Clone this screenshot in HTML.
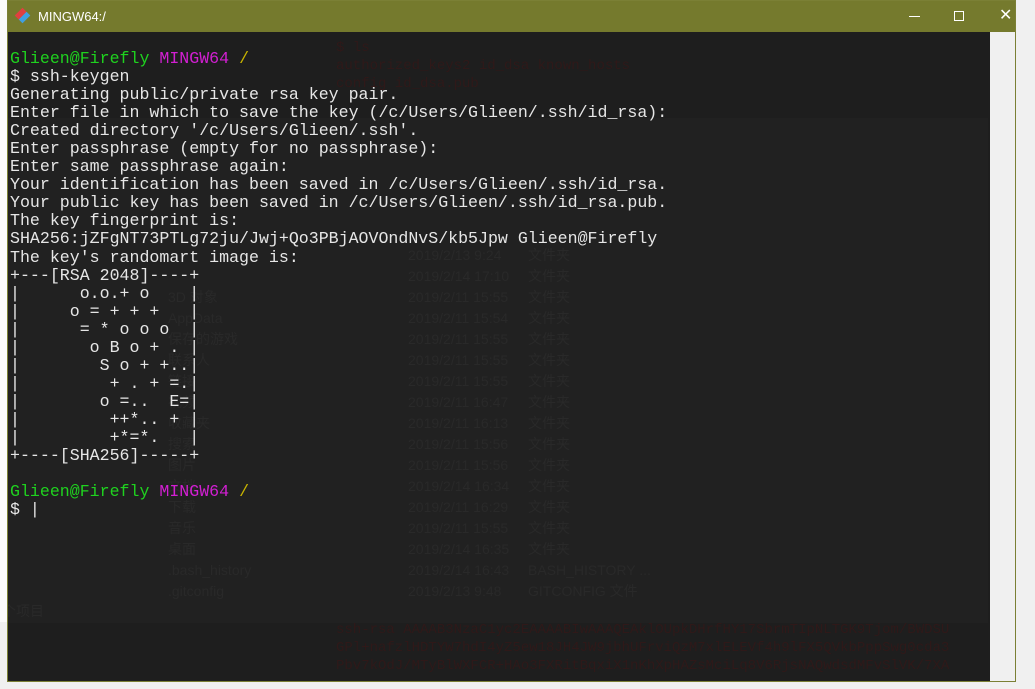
<!DOCTYPE html>
<html><head><meta charset="utf-8"><style>
*{margin:0;padding:0;box-sizing:border-box}
body{width:1035px;height:689px;overflow:hidden;background:#f0f0f0;position:relative;font-family:"Liberation Sans","Noto Sans CJK SC",sans-serif}
.abs{position:absolute}
#leftw{left:0;top:0;width:8px;height:622px;background:#fbfbfb}
#term{left:7px;top:0;width:1009px;height:682px;background:#1e1e1e;border:1px solid #7b8035;overflow:hidden}
#title{left:0;top:0;width:1007px;height:31px;background:#757a2d;color:#fff;font-size:13px}
#exp{left:0;top:117px;width:980px;height:505px;background:#212121}
#sb{left:982px;top:31px;width:25px;height:650px;background:#f0f0f0}
pre{position:absolute;left:2px;top:49px;font-family:"Liberation Mono",monospace;font-size:16.6px;line-height:18.05px;color:#e6e6e6}
.g{color:#1fd21f}.m{color:#d21fd2}.y{color:#c8b400}
.faint{color:#292929;font-size:14px;position:absolute}
.fr{color:#2f1919;font-family:"Liberation Mono",monospace;font-size:14px;position:absolute;white-space:nowrap}
</style></head><body>
<div class="abs" id="leftw"></div>
<div class="abs" id="term">
 <div class="abs" id="exp"></div>
 <div class="fr" style="left:328px;top:38px;line-height:18px">$ ls<br>authorized_keys2  id_dsa       known_hosts<br>config            id_dsa.pub</div>
 <div class="fr" style="left:328px;top:620px;line-height:18px">ssh-rsa AAAAB3NzaC1yc2EAAAABIwAAAQEAklOUpkDHrfHY17SbrmTIpNLTGK9Tjom/BWDSU<br>GPl+nafzlHDTYW7hdI4yZ5ew18JH4JW9jbhUFrviQzM7xlELEVf4h9lFX5QVkbPppSwg0cda3<br>Pbv7kOdJ/MTyBlWXFCR+HAo3FXRitBqxiX1nKhXpHAZsMciLq8V6RjsNAQwdsdMFvSlVK/7XA</div>
 <div class="faint" style="left:400px;top:244px;line-height:21px">2019/2/13 9:24<br>2019/2/14 17:10<br>2019/2/11 15:55<br>2019/2/11 15:54<br>2019/2/11 15:55<br>2019/2/11 15:55<br>2019/2/11 15:55<br>2019/2/11 16:47<br>2019/2/11 16:13<br>2019/2/11 15:56<br>2019/2/11 15:56<br>2019/2/14 16:34<br>2019/2/11 16:29<br>2019/2/11 15:55<br>2019/2/14 16:35<br>2019/2/14 16:43<br>2019/2/13 9:48</div>
 <div class="faint" style="left:160px;top:286px;line-height:21px">3D 对象<br>AppData<br>保存的游戏<br>联系人<br>链接<br>视频<br>收藏夹<br>搜索<br>图片<br>文档<br>下载<br>音乐<br>桌面<br>.bash_history<br>.gitconfig</div>
 <div class="faint" style="left:520px;top:244px;line-height:21px">文件夹<br>文件夹<br>文件夹<br>文件夹<br>文件夹<br>文件夹<br>文件夹<br>文件夹<br>文件夹<br>文件夹<br>文件夹<br>文件夹<br>文件夹<br>文件夹<br>文件夹<br>BASH_HISTORY ...<br>GITCONFIG 文件</div>
 <div class="faint" style="left:-6px;top:600px">个项目</div>
 <div class="abs" id="title">
  <div class="abs" style="left:9px;top:9px;width:11px;height:11px;transform:rotate(45deg);background:linear-gradient(90deg,#e04040 50%,#40a0e0 50%)"></div>
  <div class="abs" style="left:30px;top:8px">MINGW64:/</div>
  <div class="abs" style="left:901px;top:15px;width:11px;height:1px;background:#fff"></div>
  <div class="abs" style="left:946px;top:10px;width:10px;height:10px;border:1px solid #fff"></div>
  <div class="abs" style="left:991px;top:5px;color:#fff;font-size:16px;line-height:20px">✕</div>
 </div>
 <div class="abs" id="sb"></div>
 <pre><span class="g">Glieen@Firefly</span> <span class="m">MINGW64</span> <span class="y">/</span>
$ ssh-keygen
Generating public/private rsa key pair.
Enter file in which to save the key (/c/Users/Glieen/.ssh/id_rsa):
Created directory '/c/Users/Glieen/.ssh'.
Enter passphrase (empty for no passphrase):
Enter same passphrase again:
Your identification has been saved in /c/Users/Glieen/.ssh/id_rsa.
Your public key has been saved in /c/Users/Glieen/.ssh/id_rsa.pub.
The key fingerprint is:
SHA256:jZFgNT73PTLg72ju/Jwj+Qo3PBjAOVOndNvS/kb5Jpw Glieen@Firefly
The key's randomart image is:
+---[RSA 2048]----+
|      o.o.+ o    |
|     o = + + +   |
|      = * o o o  |
|       o B o + . |
|        S o + +..|
|         + . + =.|
|        o =..  E=|
|         ++*.. + |
|         +*=*.   |
+----[SHA256]-----+

<span class="g">Glieen@Firefly</span> <span class="m">MINGW64</span> <span class="y">/</span>
$ |</pre>
</div>
</body></html>
